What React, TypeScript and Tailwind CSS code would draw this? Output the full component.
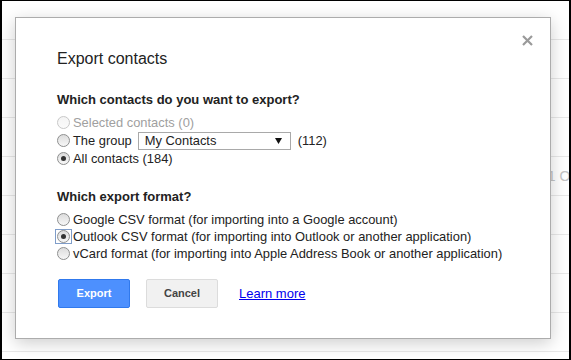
import React from "react";

function Radio({ checked = false, disabled = false }: { checked?: boolean; disabled?: boolean }) {
  return (
    <span
      className={
        "relative flex h-[13px] w-[13px] shrink-0 items-center justify-center rounded-full border " +
        (disabled
          ? "border-[#c8c8c8] bg-[linear-gradient(#f4f4f4,#fbfbfb)]"
          : "border-[#8e8f8f] bg-[linear-gradient(#dcdcdc,#f7f7f7)]")
      }
    >
      {checked && <span className="h-[5px] w-[5px] rounded-full bg-[#333]" />}
    </span>
  );
}

function Row({ children, h = "h-[17px]" }: { children: React.ReactNode; h?: string }) {
  return <div className={"flex items-center " + h}>{children}</div>;
}

export default function App() {
  const rows = Array.from({ length: 10 });
  return (
    <div className="relative h-[360px] w-[571px] overflow-hidden border-b border-l-2 border-r-2 border-t border-black bg-white font-['Liberation_Sans',Arial,sans-serif] text-[#222]">
      <div className="flex flex-col">
        {rows.map((_, i) => (
          <div
            key={i}
            className="flex h-[39px] shrink-0 items-center border-b border-[#e8e8e8] pl-[539px] text-[14px] whitespace-nowrap text-[#c4c4c4]"
          >
            {i === 4 ? "11 Oct" : ""}
          </div>
        ))}
      </div>

      <div className="absolute left-[13px] top-[16px] h-[322px] w-[536px] border border-[#acacac] bg-white shadow-[0_4px_16px_rgba(0,0,0,0.2)]">
        <svg
          className="absolute right-[17px] top-[17px]"
          width="11"
          height="11"
          viewBox="0 0 11 11"
        >
          <path d="M1 1 L10 10 M10 1 L1 10" stroke="#9a9a9a" strokeWidth="2.2" />
        </svg>

        <div className="flex flex-col pl-[41px] pt-[31px] text-[12.9px]">
          <div className="h-[20px] text-[16px] leading-[20px]">Export contacts</div>

          <div className="mt-[22px] h-[17px] text-[13px] font-bold leading-[17px]">
            Which contacts do you want to export?
          </div>
          <div className="mt-[6px] flex flex-col leading-[17px]">
            <Row>
              <Radio disabled />
              <span className="ml-[3px] text-[#a0a0a0]">Selected contacts (0)</span>
            </Row>
            <Row h="h-[19px]">
              <Radio />
              <span className="ml-[3px]">The group</span>
              <div className="ml-[6px] flex h-[18px] w-[153px] items-center justify-between border border-[#a9a9a9] bg-white pl-[6px] pr-[8px]">
                <span>My Contacts</span>
                <svg width="7" height="6" viewBox="0 0 7 6">
                  <path d="M0 0 L7 0 L3.5 6 Z" fill="#111" />
                </svg>
              </div>
              <span className="ml-[7px]">(112)</span>
            </Row>
            <Row>
              <Radio checked />
              <span className="ml-[3px]">All contacts (184)</span>
            </Row>
          </div>

          <div className="mt-[21px] h-[17px] text-[13px] font-bold leading-[17px]">Which export format?</div>
          <div className="mt-[6px] flex flex-col leading-[17px]">
            <Row>
              <Radio />
              <span className="ml-[3px]">Google CSV format (for importing into a Google account)</span>
            </Row>
            <Row>
              <span className="relative flex">
                <span className="absolute -left-[2px] -top-[1px] h-[15px] w-[17px] border border-[#7f9dc9]" />
                <Radio checked />
              </span>
              <span className="ml-[3px]">
                Outlook CSV format (for importing into Outlook or another application)
              </span>
            </Row>
            <Row>
              <Radio />
              <span className="ml-[3px]">
                vCard format (for importing into Apple Address Book or another application)
              </span>
            </Row>
          </div>

          <div className="ml-px mt-[17px] flex items-center">
            <button className="flex h-[29px] w-[72px] items-center justify-center rounded-[2px] border border-[#3079ed] bg-[#4d90fe] text-[11px] font-bold text-white">
              Export
            </button>
            <button className="ml-[16px] flex h-[29px] w-[72px] items-center justify-center rounded-[2px] border border-[#dcdcdc] bg-[#f1f1f1] text-[11px] font-bold text-[#444]">
              Cancel
            </button>
            <a className="ml-[21px] text-[13px] text-[#0000ee] underline" href="#">
              Learn more
            </a>
          </div>
        </div>
      </div>
    </div>
  );
}
